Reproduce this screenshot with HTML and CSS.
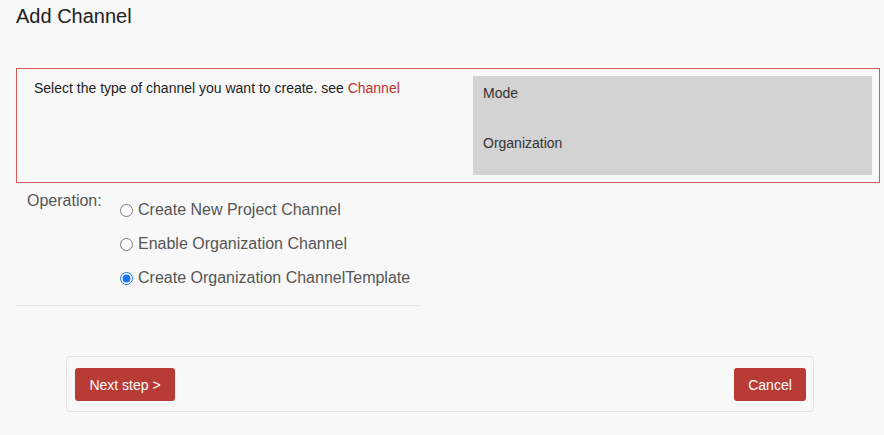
FILE: index.html
```html
<!DOCTYPE html>
<html>
<head>
<meta charset="utf-8">
<link rel="stylesheet" href="styles.css">
</head>
<body>
<h1 class="title">Add Channel</h1>
<div class="type-box">
  <div class="type-text">Select the type of channel you want to create. see <a class="link" href="#">Channel</a></div>
  <div class="type-panel">
    <div class="panel-row">Mode</div>
    <div class="panel-row">Organization</div>
  </div>
</div>
<div class="operation">
  <div class="op-label">Operation:</div>
  <div class="op-options">
    <label class="op-row"><input type="radio" name="op" class="op-radio">Create New Project Channel</label>
    <label class="op-row"><input type="radio" name="op" class="op-radio">Enable Organization Channel</label>
    <label class="op-row"><input type="radio" name="op" class="op-radio" checked>Create Organization ChannelTemplate</label>
  </div>
</div>
<div class="separator"></div>
<div class="footer">
  <button class="btn btn-next">Next step &gt;</button>
  <button class="btn btn-cancel">Cancel</button>
</div>
</body>
</html>
```
FILE: styles.css
```css
html, body {
  margin: 0;
  background: #f8f8f8;
}
body {
  padding: 0 4px 0 16px;
  font-family: "Liberation Sans", Arial, sans-serif;
  color: #333;
}
.title {
  margin: 0 0 40px 0;
  padding-top: 4px;
  font-size: 20px;
  line-height: 24px;
  font-weight: normal;
  color: #222;
}
.type-box {
  display: flex;
  border: 1px solid #d45a57;
  padding: 7px 7px 7px 17px;
  height: 99px;
}
.type-text {
  flex: 1;
  font-size: 14px;
  line-height: 20px;
  padding-top: 2px;
  color: #222;
}
.link {
  color: #c0302b;
  text-decoration: none;
}
.type-panel {
  width: 379px;
  background: #d3d3d3;
  padding: 7px 10px;
  font-size: 14px;
  line-height: 20px;
  color: #333;
}
.panel-row {
  margin-bottom: 30px;
}
.operation {
  display: flex;
  margin-top: 10px;
  padding-left: 11px;
}
.op-label {
  width: 93px;
  font-size: 16px;
  line-height: 20px;
  margin-top: -2px;
  color: #555;
}
.op-options {
  display: flex;
  flex-direction: column;
}
.op-row {
  display: flex;
  align-items: center;
  height: 34px;
  font-size: 16px;
  color: #555;
}
.op-radio {
  width: 13px;
  height: 13px;
  margin: 1px 5px 0 0;
  accent-color: #1a73f0;
}
.separator {
  width: 404px;
  height: 1px;
  background: #e6e6e6;
  margin-top: 10px;
}
.footer {
  display: flex;
  justify-content: space-between;
  width: 731px;
  margin: 50px 0 0 50px;
  padding: 11px 7px 10px 8px;
  border: 1px solid #e4e4e4;
  border-radius: 4px;
}
.btn {
  height: 33px;
  border: none;
  border-radius: 3px;
  background: #b83b36;
  color: #fff;
  font-family: "Liberation Sans", Arial, sans-serif;
  font-size: 14px;
  padding: 0;
}
.btn-next {
  width: 100px;
}
.btn-cancel {
  width: 72px;
}
```
